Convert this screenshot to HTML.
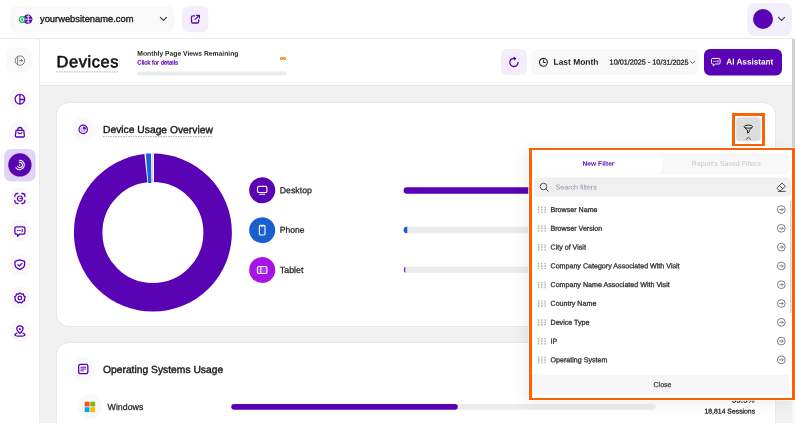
<!DOCTYPE html>
<html>
<head>
<meta charset="utf-8">
<style>
*{box-sizing:border-box;margin:0;padding:0}
html,body{width:795px;height:423px;overflow:hidden;background:#f1f1f1;font-family:"Liberation Sans",sans-serif;color:#111}
body{position:relative}
#wrap{position:absolute;left:0;top:0;width:795px;height:423px;will-change:transform}
.a{position:absolute}
.t{position:absolute;white-space:nowrap;line-height:1;transform-origin:0 50%}
svg.L{position:absolute;left:0;top:0;overflow:visible}
.m{-webkit-text-stroke:0.25px currentColor}
.m2{-webkit-text-stroke:0.4px currentColor}
.rn{font-size:7.12px;color:#333;-webkit-text-stroke:0.3px #333}
</style>
</head>
<body>
<div id="wrap">
<div class="a" style="left:0px;top:0px;width:795px;height:38px;background:#fff;"></div>
<div class="a" style="left:0px;top:38px;width:795px;height:1px;background:#e7e7e7;"></div>
<div class="a" style="left:0px;top:39px;width:39px;height:384px;background:#fff;"></div>
<div class="a" style="left:39px;top:39px;width:1px;height:384px;background:#ebebeb;"></div>
<div class="a" style="left:40px;top:39px;width:752px;height:46px;background:#fff;"></div>
<div class="a" style="left:40px;top:85px;width:752px;height:1px;background:#e8e8e8;"></div>
<div class="a" style="left:792px;top:39px;width:3px;height:384px;background:#d0d0d0;background:linear-gradient(#d0d0d0 0,#d0d0d0 300px,#f8f8f8 300px);"></div>
<div class="a" style="left:57px;top:102.5px;width:718px;height:223px;background:#fff;border-radius:12px;box-shadow:0 0 0 1px #e9e9e9"></div>
<div class="a" style="left:57px;top:342.5px;width:718px;height:100px;background:#fff;border-radius:12px;box-shadow:0 0 0 1px #e9e9e9"></div>
<svg class="L" width="795" height="423" viewBox="0 0 795 423">
<rect x="10" y="6" width="164.5" height="26" rx="7" fill="#f9f9fa" />
<rect x="182" y="6" width="26.3" height="26" rx="6" fill="#f3edfc" />
<rect x="747" y="3" width="45" height="33" rx="8" fill="#f3eefc" />
<circle cx="763" cy="19" r="10" fill="#5903b5"/>
<svg x="159.4" y="16.6" width="8" height="5" viewBox="0 0 8 5" overflow="visible"><path d="M0.9 0.8L4 3.8L7.1 0.8" fill="none" stroke="#333" stroke-width="1.1" stroke-linecap="round" stroke-linejoin="round"/></svg>
<svg x="777.5" y="16.6" width="8" height="5" viewBox="0 0 8 5" overflow="visible"><path d="M0.9 0.8L4 3.8L7.1 0.8" fill="none" stroke="#333" stroke-width="1.1" stroke-linecap="round" stroke-linejoin="round"/></svg>
<svg x="17" y="13" width="16" height="13" viewBox="0 0 16 13" overflow="visible"><circle cx="10.7" cy="6.2" r="4.7" fill="#5903b5"/><path d="M11.2 2V10.4M8 6.2H14.6M9.6 3.4Q11.2 4.4 12.8 3.4M9.6 9Q11.2 8 12.8 9" stroke="#fff" stroke-width="0.8" fill="none"/><circle cx="5.2" cy="6.5" r="2.8" fill="#fff" stroke="#23b26d" stroke-width="1.3"/><circle cx="5.2" cy="6.5" r="1.2" fill="#23b26d"/></svg>
<svg x="190.5" y="14" width="10" height="10" viewBox="0 0 10 10" overflow="visible"><path d="M4.2 1.8H2.6Q1 1.8 1 3.4V7.4Q1 9 2.6 9H6.6Q8.2 9 8.2 7.4V5.9" fill="none" stroke="#5903b5" stroke-width="1.3" stroke-linecap="round"/><path d="M4.6 5.4L8.6 1.6M6.1 1.3H8.9V4.1" fill="none" stroke="#5903b5" stroke-width="1.25" stroke-linecap="round" stroke-linejoin="round"/></svg>
<rect x="6.5" y="47.5" width="26" height="25" rx="7" fill="#f9f9f9" />
<svg x="13.9" y="54.6" width="12" height="12" viewBox="0 0 12 12" overflow="visible"><circle cx="6" cy="6" r="4.7" fill="none" stroke="#777" stroke-width="1"/><path d="M3.7 2.4V9.6M5.4 6H8.6M7.3 4.6L8.7 6L7.3 7.4" fill="none" stroke="#777" stroke-width="0.9" stroke-linecap="round" stroke-linejoin="round"/></svg>
<circle cx="19.9" cy="99.2" r="11" fill="#f9f9f9"/>
<circle cx="19.9" cy="132.3" r="11" fill="#f9f9f9"/>
<circle cx="19.9" cy="198.5" r="11" fill="#f9f9f9"/>
<circle cx="19.9" cy="231.1" r="11" fill="#f9f9f9"/>
<circle cx="19.9" cy="264.4" r="11" fill="#f9f9f9"/>
<circle cx="19.9" cy="297.8" r="11" fill="#f9f9f9"/>
<circle cx="19.9" cy="331" r="11" fill="#f9f9f9"/>
<svg x="13.899999999999999" y="93.2" width="12" height="12" viewBox="0 0 12 12" overflow="visible"><circle cx="6" cy="6" r="4.8" fill="none" stroke="#5903b5" stroke-width="1.3"/><path d="M6 1.2V10.8M6 6.3H10.8" fill="none" stroke="#5903b5" stroke-width="1.3"/></svg>
<svg x="14.399999999999999" y="126.4" width="11" height="12" viewBox="0 0 11 12" overflow="visible"><path d="M1.7 4H9.3L10 9.2Q10.1 10.6 8.7 10.6H2.3Q0.9 10.6 1 9.2Z" fill="none" stroke="#5903b5" stroke-width="1.3" stroke-linejoin="round"/><path d="M3.4 4V3.2Q3.4 1.1 5.5 1.1Q7.6 1.1 7.6 3.2V4" fill="none" stroke="#5903b5" stroke-width="1.3"/><path d="M3.4 6.2Q5.5 8.2 7.6 6.2" fill="none" stroke="#5903b5" stroke-width="1.1" stroke-linecap="round"/></svg>
<rect x="4.1" y="149" width="31.5" height="32.5" rx="7" fill="#e1d3f5" />
<circle cx="19.9" cy="164.9" r="11.65" fill="#5903b5"/>
<svg x="13.899999999999999" y="158.9" width="12" height="12" viewBox="0 0 12 12" overflow="visible"><path d="M5.2 1.4A4.7 4.7 0 1 1 2 8.9" fill="none" stroke="#fff" stroke-width="1.1" stroke-linecap="round"/><path d="M5.4 3.6A2.6 2.6 0 1 1 3.8 7.6" fill="none" stroke="#fff" stroke-width="1.1" stroke-linecap="round"/><circle cx="5.6" cy="6.1" r="0.8" fill="#fff"/></svg>
<svg x="13.899999999999999" y="192.5" width="12" height="12" viewBox="0 0 12 12" overflow="visible"><path d="M1 4V3.4Q1 1 3.4 1H4M8 1H8.6Q11 1 11 3.4V4M11 8V8.6Q11 11 8.6 11H8M4 11H3.4Q1 11 1 8.6V8" fill="none" stroke="#5903b5" stroke-width="1.3" stroke-linecap="round"/><circle cx="6" cy="6" r="2.5" fill="none" stroke="#5903b5" stroke-width="1.2"/><path d="M6 6H7.2" fill="none" stroke="#5903b5" stroke-width="1" stroke-linecap="round"/></svg>
<svg x="13.899999999999999" y="225.7" width="12" height="12" viewBox="0 0 12 12" overflow="visible"><path d="M2.6 1.2H9.4Q11 1.2 11 2.8V6.8Q11 8.4 9.4 8.4H6L3.6 10.6V8.4H2.6Q1 8.4 1 6.8V2.8Q1 1.2 2.6 1.2Z" fill="none" stroke="#5903b5" stroke-width="1.3" stroke-linejoin="round"/><path d="M3.6 4.8H4.2M5.8 4.8H6.4M8.3 3.8V5.8" fill="none" stroke="#5903b5" stroke-width="1.1" stroke-linecap="round"/></svg>
<svg x="13.799999999999999" y="258.6" width="12" height="12" viewBox="0 0 12 12" overflow="visible"><path d="M6 1.2L10.8 2.8V5.8Q10.8 8.9 6 10.8Q1.2 8.9 1.2 5.8V2.8Z" fill="none" stroke="#5903b5" stroke-width="1.3" stroke-linejoin="round"/><path d="M4 6L5.5 7.5L8.2 4.7" fill="none" stroke="#5903b5" stroke-width="1.2" stroke-linecap="round" stroke-linejoin="round"/></svg>
<svg x="13.899999999999999" y="291.9" width="12" height="12" viewBox="0 0 12 12" overflow="visible"><path d="M6 0.9L7.5 2L9.4 1.9L9.9 3.7L11.3 5L10.5 6.7L10.7 8.6L8.9 9.2L7.7 10.7L6 10L4.3 10.7L3.1 9.2L1.3 8.6L1.5 6.7L0.7 5L2.1 3.7L2.6 1.9L4.5 2Z" transform="translate(0 0.2)" fill="none" stroke="#5903b5" stroke-width="1.3" stroke-linejoin="round"/><circle cx="6" cy="6" r="1.8" fill="none" stroke="#5903b5" stroke-width="1.2"/></svg>
<svg x="13.899999999999999" y="325" width="12" height="12" viewBox="0 0 12 12" overflow="visible"><path d="M6 8.4Q2.9 5.6 2.9 3.8Q2.9 0.9 6 0.9Q9.1 0.9 9.1 3.8Q9.1 5.6 6 8.4Z" fill="none" stroke="#5903b5" stroke-width="1.3" stroke-linejoin="round"/><circle cx="6" cy="3.9" r="1" fill="#5903b5"/><path d="M3 8.2Q1 8.8 1 9.7Q1 11.2 6 11.2Q11 11.2 11 9.7Q11 8.8 9 8.2" fill="none" stroke="#5903b5" stroke-width="1.3" stroke-linecap="round"/></svg>
<path d="M56.5 71.9H118.5" stroke="#b0b0b0" stroke-width="1" stroke-dasharray="1.5 1" fill="none"/>
<rect x="137.3" y="71.5" width="149.5" height="4" rx="2" fill="#ebebeb" />
<svg x="279.8" y="56.2" width="6.3" height="4.5" viewBox="0 0 7 5" overflow="visible"><path d="M3.5 2.5C2.6 1 0.7 1 0.7 2.5S2.6 4 3.5 2.5S5.4 1 6.3 2.5S4.4 4 3.5 2.5Z" fill="none" stroke="#f57c14" stroke-width="1.2"/></svg>
<rect x="501" y="49" width="26" height="26" rx="6" fill="#f3edfc" />
<svg x="508.5" y="56.5" width="11" height="11" viewBox="0 0 11 11" overflow="visible"><path d="M9.5 5.9A4.1 4.1 0 1 1 6.5 1.95" fill="none" stroke="#5903b5" stroke-width="1.3" stroke-linecap="round"/><path d="M5.5 0.9L7 2L5.8 3.4" fill="none" stroke="#5903b5" stroke-width="1.2" stroke-linecap="round" stroke-linejoin="round"/></svg>
<rect x="531.5" y="49" width="167.5" height="26" rx="6" fill="#f8f8f8" />
<svg x="538.4" y="57.3" width="10" height="10" viewBox="0 0 10 10" overflow="visible"><circle cx="5" cy="5" r="3.95" fill="none" stroke="#2a2a2a" stroke-width="1.1"/><path d="M5 2.7V5.2H6.9" fill="none" stroke="#2a2a2a" stroke-width="1" stroke-linecap="round" stroke-linejoin="round"/></svg>
<svg x="689.9" y="60.8" width="5.2" height="3.5" viewBox="0 0 6 4" overflow="visible"><path d="M0.7 0.7L3 3L5.3 0.7" fill="none" stroke="#333" stroke-width="0.9" stroke-linecap="round" stroke-linejoin="round"/></svg>
<rect x="704" y="49" width="78" height="26.5" rx="6" fill="#5903b5" />
<svg x="710.8" y="57.7" width="10" height="9" viewBox="0 0 10 9" overflow="visible"><path d="M2 0.7H8Q9.3 0.7 9.3 2V5Q9.3 6.3 8 6.3H4.6L2.6 8.2V6.3H2Q0.7 6.3 0.7 5V2Q0.7 0.7 2 0.7Z" fill="none" stroke="#fff" stroke-width="1" stroke-linejoin="round"/><path d="M2.8 3.6H3.4M4.8 3.6H5.4M7.2 2.7V4.5" stroke="#fff" stroke-width="0.9" stroke-linecap="round"/></svg>
<circle cx="83.3" cy="129.3" r="11.9" fill="#f9f9f9"/>
<svg x="78.2" y="124.4" width="10" height="10" viewBox="0 0 10 10" overflow="visible"><circle cx="5" cy="5" r="4.2" fill="none" stroke="#5903b5" stroke-width="1.2"/><path d="M5 2.2A2.8 2.8 0 0 1 7.8 5H5Z" fill="#5903b5"/><path d="M4.2 2.4A2.8 2.8 0 1 0 7.6 5.8H4.2Z" fill="#c9a8ee"/></svg>
<path d="M103 136.6H213" stroke="#b0b0b0" stroke-width="1" stroke-dasharray="1.5 1" fill="none"/>
<svg x="73.9" y="153.6" width="158" height="158" viewBox="-79 -79 158 158" overflow="visible"><circle r="64.75" fill="none" stroke="#5903b5" stroke-width="28.5"/><path d="M1.1 -82L-8.9 -82L-5.2 -48L1.1 -48Z" fill="#fff"/><path d="M-7.1 -79.2L-1.9 -79.2L-1.5 -49.5L-4.7 -49.5Z" fill="#1a63d6"/><path d="M-1.2 -79.5L0.2 -79.5L0.2 -49.5L-0.9 -49.5Z" fill="#e9c8fb"/></svg>
<circle cx="262.2" cy="190.3" r="13" fill="#5903b5"/>
<svg x="256.7" y="185.3" width="11" height="10" viewBox="0 0 11 10" overflow="visible"><rect x="0.8" y="1.1" width="9.4" height="6.1" rx="1.3" fill="none" stroke="#fff" stroke-width="1.1"/><path d="M3 8.9H8" stroke="#fff" stroke-width="1.1" stroke-linecap="round"/></svg>
<circle cx="262.2" cy="230.2" r="13" fill="#1a5fd0"/>
<svg x="258.7" y="224.7" width="7" height="11" viewBox="0 0 7 11" overflow="visible"><rect x="0.7" y="0.7" width="5.6" height="9.6" rx="1.2" fill="none" stroke="#fff" stroke-width="1.1"/><path d="M2.7 1.9H4.3" stroke="#fff" stroke-width="0.8" stroke-linecap="round"/></svg>
<circle cx="262.2" cy="270" r="13" fill="#a713e6"/>
<svg x="256.7" y="265.5" width="11" height="9" viewBox="0 0 11 9" overflow="visible"><rect x="0.7" y="1" width="9.6" height="7" rx="1.5" fill="rgba(255,255,255,0.18)" stroke="#fff" stroke-width="1.1"/><path d="M4.1 1.2V7.8" stroke="#fff" stroke-width="1"/></svg>
<rect x="403.6" y="187.14999999999998" width="150" height="6.6" rx="3.3" fill="#ececec" />
<rect x="403.6" y="187.14999999999998" width="150" height="6.6" rx="3.3" fill="#5903b5" />
<rect x="403.6" y="226.64999999999998" width="150" height="6.6" rx="3.3" fill="#ececec" />
<path d="M407.3 226.75H406.8A3.2 3.2 0 0 0 406.8 233.14999999999998H407.3Z" fill="#1a5fd0"/>
<rect x="403.6" y="266.45" width="150" height="6.6" rx="3.3" fill="#ececec" />
<clipPath id="c269"><rect x="403.6" y="265.75" width="1.7" height="8"/></clipPath><rect x="403.6" y="266.55" width="10" height="6.4" rx="3.2" fill="#a713e6" clip-path="url(#c269)"/>
<circle cx="83.3" cy="369" r="11.9" fill="#f9f9f9"/>
<svg x="77.9" y="363.7" width="10.7" height="10.7" viewBox="0 0 10 10" overflow="visible"><rect x="0.7" y="0.7" width="8.6" height="8.6" rx="1.8" fill="none" stroke="#5903b5" stroke-width="1.2"/><path d="M2.8 3.3H7.2M2.8 5H7.2M2.8 6.7H5" fill="none" stroke="#5903b5" stroke-width="0.9" stroke-linecap="round"/></svg>
<circle cx="89.7" cy="406.8" r="12.2" fill="#f9f9f9"/>
<svg x="84.7" y="401.7" width="10.4" height="10.4" viewBox="0 0 10.4 10.4" overflow="visible"><rect x="0" y="0" width="4.8" height="4.8" fill="#f25022"/><rect x="5.6" y="0" width="4.8" height="4.8" fill="#7fba00"/><rect x="0" y="5.6" width="4.8" height="4.8" fill="#00a4ef"/><rect x="5.6" y="5.6" width="4.8" height="4.8" fill="#ffb900"/></svg>
<rect x="231.3" y="404" width="424.5" height="5.7" rx="2.85" fill="#ececec" />
<rect x="231.3" y="404" width="226.5" height="5.7" rx="2.85" fill="#5903b5" />
</svg>
<div class="t" style="left:40px;top:14px;font-size:9.35px;color:#1a1a1a;transform:translate(0px,0.9px) rotate(0.03deg);-webkit-text-stroke:0.35px #1a1a1a;">yourwebsitename.com</div>
<div class="t" style="left:56px;top:53px;font-size:16.4px;color:#111;transform:translate(0.6px,0.3px) rotate(0.03deg);-webkit-text-stroke:0.62px #111;letter-spacing:0.6px;">Devices</div>
<div class="t" style="left:137px;top:50px;font-size:6.75px;color:#222;transform:translate(0.3px,0.7px) rotate(0.03deg);font-weight:bold;">Monthly Page Views Remaining</div>
<div class="t m" style="left:137px;top:59px;font-size:6px;color:#5903b5;transform:translate(0.3px,0.5px) rotate(0.03deg);">Click for details</div>
<div class="t" style="left:553px;top:57px;font-size:8.45px;color:#222;transform:translate(0.5px,0.8px) rotate(0.03deg);font-weight:bold;">Last Month</div>
<div class="t m" style="left:609px;top:58px;font-size:7.25px;color:#222;transform:translate(0.6px,0.6px) rotate(0.03deg);">10/01/2025 - 10/31/2025</div>
<div class="t" style="left:726px;top:58px;font-size:8.2px;color:#fff;transform:translate(0.3px,0.6px) rotate(0.03deg);font-weight:bold;">AI Assistant</div>
<div class="t m2" style="left:103px;top:125px;font-size:10.3px;color:#1a1a1a;transform:translate(0px,0.1px) rotate(0.03deg);">Device Usage Overview</div>
<div class="t m" style="left:279px;top:186px;font-size:8.75px;color:#222;transform:translate(0.8px,0.3px) rotate(0.03deg);">Desktop</div>
<div class="t m" style="left:279px;top:225px;font-size:8.6px;color:#222;transform:translate(0.8px,0.8px) rotate(0.03deg);">Phone</div>
<div class="t m" style="left:279px;top:266px;font-size:8.9px;color:#222;transform:translate(0.8px,0.0px) rotate(0.03deg);">Tablet</div>
<div class="t m2" style="left:103px;top:364px;font-size:10.3px;color:#1a1a1a;transform:translate(0px,0.9px) rotate(0.03deg);">Operating Systems Usage</div>
<div class="t m" style="left:107px;top:402px;font-size:8.8px;color:#222;transform:translate(0.6px,0.9px) rotate(0.03deg);">Windows</div>
<div class="t" style="left:731px;top:396px;font-size:8.1px;color:#222;transform:translate(0.7px,0.8px) rotate(0.03deg);font-weight:bold;">55.5%</div>
<div class="t m" style="left:704px;top:408px;font-size:6.85px;color:#222;transform:translate(0.5px,0.4px) rotate(0.03deg);">18,814 Sessions</div>
<div class="a" style="left:732px;top:113px;width:33px;height:33px;border:solid #fb6205;border-width:3px 3px 2px 3px;background:#fff"></div>
<div class="a" style="left:529px;top:148px;width:266px;height:252px;border:solid #fb6205;border-width:2px 3px 2px 3px;background:#fff;box-shadow:0 0 0 1px rgba(255,255,255,0.7),-4px 3px 14px rgba(0,0,0,0.07)"></div>
<svg class="L" width="795" height="423" viewBox="0 0 795 423">
<rect x="736.2" y="117.3" width="24.5" height="24" rx="4" fill="#dddddd" />
<svg x="743.3" y="124.6" width="10" height="9" viewBox="0 0 10 9" overflow="visible"><ellipse cx="5" cy="2.05" rx="4.25" ry="1.55" fill="none" stroke="#222" stroke-width="1"/><path d="M0.9 2.6L4.15 5.7V8.5L5.85 7.5V5.7L9.1 2.6" fill="none" stroke="#222" stroke-width="1" stroke-linejoin="round"/></svg>
<svg x="745.4" y="136.3" width="6" height="4" viewBox="0 0 6 4" overflow="visible"><path d="M0.7 3.1L3 0.9L5.3 3.1" fill="none" stroke="#333" stroke-width="0.9" stroke-linecap="round" stroke-linejoin="round"/></svg>
<rect x="534.5" y="152.7" width="256.3" height="21.5" rx="7" fill="#f8f8f8" />
<rect x="534.5" y="152.7" width="128" height="21.5" rx="7" fill="#fff" />
<rect x="534.3" y="177.4" width="256.5" height="19.2" rx="4" fill="#f0f0f0" />
<svg x="539.3" y="182.3" width="10" height="10" viewBox="0 0 10 10" overflow="visible"><circle cx="4.2" cy="4.2" r="3.3" fill="none" stroke="#444" stroke-width="0.9"/><path d="M6.7 6.7L9 9" stroke="#444" stroke-width="0.9" stroke-linecap="round"/></svg>
<svg x="776.3" y="182.1" width="10" height="10" viewBox="0 0 10 10" overflow="visible"><path d="M5.8 0.9L9 4.1L4.6 8.5H2.9L1 6.6Q0.6 6.1 1 5.7Z" fill="none" stroke="#333" stroke-width="0.85" stroke-linejoin="round"/><path d="M3.2 3.5L6.4 6.7" stroke="#333" stroke-width="0.85"/><path d="M2 9.3H9" stroke="#333" stroke-width="0.85" stroke-linecap="round"/></svg>
<rect x="790.1" y="200.5" width="1.4" height="113" rx="0.7" fill="#d0d5df" />
<rect x="532" y="375" width="257" height="19.5" rx="0" fill="#f6f6f6" />
<defs><g id="grip"><path d="M0.7 0.9V2.4M0.7 3.2V5M0.7 5.8V7.4M3.9 0.9V2.4M3.9 3.2V5M3.9 5.8V7.4M7.1 0.9V2.4M7.1 3.2V5M7.1 5.8V7.4" stroke="#9a9a9a" stroke-width="1.05" fill="none"/></g><g id="go"><circle cx="4.5" cy="4.5" r="3.9" fill="none" stroke="#555" stroke-width="0.75"/><path d="M2.8 4.5H6.2M5 3.2L6.3 4.5L5 5.8" fill="none" stroke="#555" stroke-width="0.7" stroke-linecap="round" stroke-linejoin="round"/></g></defs>
<use href="#grip" x="538" y="205.58"/>
<use href="#go" x="776.8" y="205.05"/>
<use href="#grip" x="538" y="224.37"/>
<use href="#go" x="776.8" y="223.84"/>
<use href="#grip" x="538" y="243.16"/>
<use href="#go" x="776.8" y="242.63"/>
<use href="#grip" x="538" y="261.95"/>
<use href="#go" x="776.8" y="261.42"/>
<use href="#grip" x="538" y="280.74"/>
<use href="#go" x="776.8" y="280.21"/>
<use href="#grip" x="538" y="299.53"/>
<use href="#go" x="776.8" y="299.00"/>
<use href="#grip" x="538" y="318.32"/>
<use href="#go" x="776.8" y="317.79"/>
<use href="#grip" x="538" y="337.11"/>
<use href="#go" x="776.8" y="336.58"/>
<use href="#grip" x="538" y="355.90"/>
<use href="#go" x="776.8" y="355.37"/>
</svg>
<div class="t rn" style="left:550px;top:206px;font-size:7.12px;color:#333;transform:translate(0.5px,0.9px) rotate(0.03deg);">Browser Name</div>
<div class="t rn" style="left:550px;top:225px;font-size:7.12px;color:#333;transform:translate(0.5px,0.69px) rotate(0.03deg);">Browser Version</div>
<div class="t rn" style="left:550px;top:244px;font-size:7.12px;color:#333;transform:translate(0.5px,0.48px) rotate(0.03deg);">City of Visit</div>
<div class="t rn" style="left:550px;top:263px;font-size:7.12px;color:#333;transform:translate(0.5px,0.27px) rotate(0.03deg);">Company Category Associated With Visit</div>
<div class="t rn" style="left:550px;top:282px;font-size:7.12px;color:#333;transform:translate(0.5px,0.06px) rotate(0.03deg);">Company Name Associated With Visit</div>
<div class="t rn" style="left:550px;top:300px;font-size:7.12px;color:#333;transform:translate(0.5px,0.85px) rotate(0.03deg);">Country Name</div>
<div class="t rn" style="left:550px;top:319px;font-size:7.12px;color:#333;transform:translate(0.5px,0.64px) rotate(0.03deg);">Device Type</div>
<div class="t rn" style="left:550px;top:338px;font-size:7.12px;color:#333;transform:translate(0.5px,0.43px) rotate(0.03deg);">IP</div>
<div class="t rn" style="left:550px;top:357px;font-size:7.12px;color:#333;transform:translate(0.5px,0.22px) rotate(0.03deg);">Operating System</div>
<div class="t" style="left:582px;top:160px;font-size:6.7px;color:#5903b5;transform:translate(0.5px,0.8px) rotate(0.03deg);font-weight:bold;">New Filter</div>
<div class="t" style="left:691px;top:160px;font-size:7.05px;color:#c6c6c6;transform:translate(0.8px,0px) rotate(0.03deg);">Report's Saved Filters</div>
<div class="t" style="left:555px;top:183px;font-size:7.05px;color:#8e96aa;transform:translate(0.6px,0.5px) rotate(0.03deg);">Search filters</div>
<div class="t" style="left:653px;top:381px;font-size:7.05px;color:#333;transform:translate(0.5px,0px) rotate(0.03deg);-webkit-text-stroke:0.2px #333;">Close</div>
</div>
</body>
</html>
